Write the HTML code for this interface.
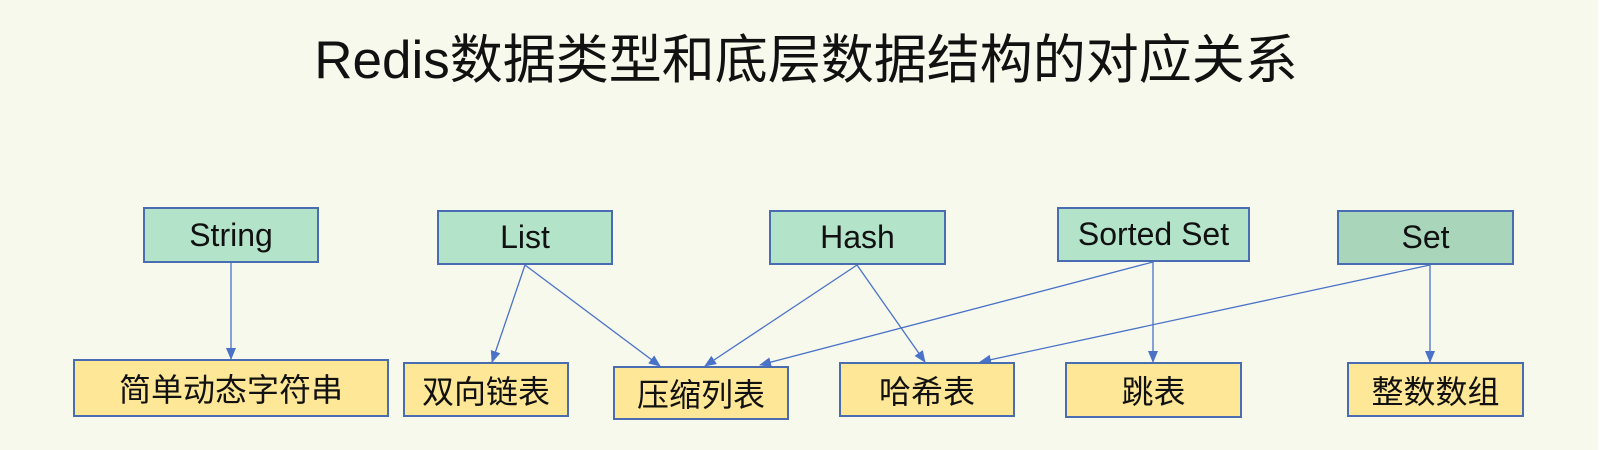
<!DOCTYPE html>
<html><head><meta charset="utf-8"><style>
body{margin:0;width:1612px;height:450px;background:#f7f9ed;position:relative;overflow:hidden;font-family:"Liberation Sans","Noto Sans CJK SC",sans-serif;}
.w{position:absolute;left:1598px;top:0;width:14px;height:450px;background:#fff}
.t{position:absolute;left:0px;width:1612px;text-align:center;top:18px;font-size:53px;color:#111}
.b{position:absolute;box-sizing:border-box;border:2px solid #4a6cb0;display:flex;align-items:center;justify-content:center;font-size:32px;color:#111}
.c{font-size:32px}
.g{background:#b3e4ca}.d{background:#a9d6bb}.y{background:#fee796}
svg{position:absolute;left:0;top:0}
</style></head><body>
<div class="t">Redis数据类型和底层数据结构的对应关系</div>
<svg width="1612" height="450">
<defs>
<marker id="m" markerWidth="12" markerHeight="10" refX="11" refY="5" orient="auto" markerUnits="userSpaceOnUse"><path d="M0,0 L12,5 L0,10z" fill="#4a72c8"/></marker></defs>
<g stroke="#4a72c8" stroke-width="1.3" fill="none" marker-end="url(#m)">
<line x1="231" y1="263" x2="231" y2="359"/>
<line x1="525" y1="265" x2="492" y2="362"/>
<line x1="525" y1="265" x2="660" y2="366"/>
<line x1="857" y1="265" x2="705" y2="366"/>
<line x1="857" y1="265" x2="925" y2="362"/>
<line x1="1153" y1="262" x2="760" y2="365"/>
<line x1="1153" y1="262" x2="1153" y2="362"/>
<line x1="1430" y1="265" x2="980" y2="362"/>
<line x1="1430" y1="265" x2="1430" y2="362"/>
</g></svg>
<div class="b g" style="left:143px;top:207px;width:176px;height:56px">String</div>
<div class="b g" style="left:437px;top:210px;width:176px;height:55px">List</div>
<div class="b g" style="left:769px;top:210px;width:177px;height:55px">Hash</div>
<div class="b g" style="left:1057px;top:207px;width:193px;height:55px">Sorted Set</div>
<div class="b d" style="left:1337px;top:210px;width:177px;height:55px">Set</div>
<div class="b y" style="left:73px;top:359px;width:316px;height:58px"><span class="c">简单动态字符串</span></div>
<div class="b y" style="left:403px;top:362px;width:166px;height:55px"><span class="c">双向链表</span></div>
<div class="b y" style="left:613px;top:366px;width:176px;height:54px"><span class="c">压缩列表</span></div>
<div class="b y" style="left:839px;top:362px;width:176px;height:55px"><span class="c">哈希表</span></div>
<div class="b y" style="left:1065px;top:362px;width:177px;height:56px"><span class="c">跳表</span></div>
<div class="b y" style="left:1347px;top:362px;width:177px;height:55px"><span class="c">整数数组</span></div>
<div class="w"></div>
</body></html>
